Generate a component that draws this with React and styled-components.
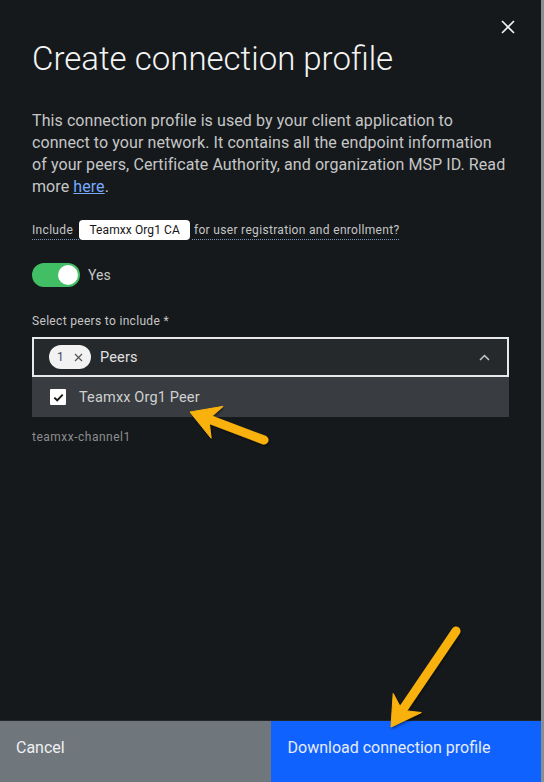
import React from 'react';
import styled, { createGlobalStyle } from 'styled-components';

const Global = createGlobalStyle`
  html, body { margin: 0; padding: 0; background: #15191c; }
  body { font-family: Roboto, "Noto Sans", sans-serif; -webkit-font-smoothing: antialiased; }
  * { box-sizing: border-box; }
`;

const Modal = styled.div`
  position: relative;
  width: 544px;
  height: 782px;
  background: #15191c;
  border-right: 3px solid #8a8e92;
  display: flex;
  flex-direction: column;
  overflow: hidden;
`;

const Header = styled.header`
  padding: 0 26px 0 32px;
`;

const CloseRow = styled.div`
  display: flex;
  justify-content: flex-end;
  padding-top: 20px;
  height: 39px;
`;

const CloseButton = styled.button`
  width: 14px;
  height: 14px;
  padding: 0;
  border: 0;
  background: transparent;
  color: #f4f4f4;
  display: flex;
  cursor: pointer;
  svg { display: block; }
`;

const Title = styled.h2`
  margin: 0;
  font-size: 33px;
  line-height: 40px;
  font-weight: 300;
  color: #f4f4f4;
  letter-spacing: 0;
`;

const Content = styled.div`
  flex: 1;
  padding: 0 32px;
  display: flex;
  flex-direction: column;
`;

const Description = styled.p`
  margin: 31px 0 0;
  font-size: 16px;
  line-height: 22px;
  color: #c6c6c6;
  white-space: nowrap;
  letter-spacing: 0.08px;
`;

const Link = styled.a`
  color: #78a9ff;
  text-decoration: underline;
`;

const IncludeRow = styled.div`
  margin-top: 22px;
  display: flex;
  align-items: center;
  height: 20px;
  font-size: 12px;
  color: #c6c6c6;
  letter-spacing: 0.32px;
`;

const Definition = styled.span`
  line-height: 16px;
  border-bottom: 1px dotted #7d93b8;
  padding-bottom: 1px;
  margin-top: 2px;
  padding-right: ${p => (p.$lead ? '3px' : '0')};
  padding-left: ${p => (p.$lead ? '0' : '2px')};
`;

const InlineTag = styled.span`
  display: inline-flex;
  align-items: center;
  height: 20px;
  padding: 0 10px;
  margin: 0 2px 0 0;
  background: #ffffff;
  color: #161616;
  border-radius: 4px;
  font-size: 12px;
  letter-spacing: 0.1px;
  position: relative;
  z-index: 1;
`;

const ToggleRow = styled.label`
  margin-top: 23px;
  display: flex;
  align-items: center;
  gap: 8px;
  font-size: 14px;
  color: #c6c6c6;
`;

const ToggleTrack = styled.span`
  width: 48px;
  height: 24px;
  border-radius: 12px;
  background: ${p => (p.$on ? '#42be65' : '#6f6f6f')};
  display: flex;
  align-items: center;
  justify-content: ${p => (p.$on ? 'flex-end' : 'flex-start')};
  padding: 0 2px;
`;

const ToggleKnob = styled.span`
  width: 20px;
  height: 20px;
  border-radius: 50%;
  background: #ffffff;
`;

const FieldLabel = styled.div`
  margin-top: 26px;
  font-size: 12px;
  line-height: 16px;
  color: #c6c6c6;
  letter-spacing: 0.32px;
`;

const MultiSelect = styled.div`
  position: relative;
  margin-top: 8px;
`;

const Field = styled.div`
  height: 40px;
  border: 2px solid #e8e8e8;
  background: #25292c;
  display: flex;
  align-items: center;
  padding: 0 17px 0 15px;
  gap: 9px;
`;

const CountTag = styled.span`
  display: inline-flex;
  align-items: center;
  justify-content: space-between;
  width: 42px;
  height: 24px;
  border-radius: 12px;
  background: #f2f2f2;
  padding: 0 8px 0 8px;
  font-size: 12px;
  color: #3a4a66;
  svg { display: block; }
`;

const FieldText = styled.span`
  flex: 1;
  font-size: 14.5px;
  letter-spacing: 0.16px;
  color: #e0e0e0;
`;

const Chevron = styled.span`
  display: flex;
  color: #c6c6c6;
  svg { display: block; }
`;

const Menu = styled.ul`
  position: absolute;
  left: 0;
  right: 0;
  top: 40px;
  margin: 0;
  padding: 0;
  list-style: none;
  background: #393d41;
  z-index: 2;
`;

const MenuItem = styled.li`
  height: 40px;
  display: flex;
  align-items: center;
  padding-left: 18px;
  gap: 13px;
  font-size: 14.5px;
  letter-spacing: 0.16px;
  color: #d0d0d0;
`;

const Checkbox = styled.span`
  width: 16px;
  height: 16px;
  border-radius: 1px;
  background: #ffffff;
  display: flex;
  align-items: center;
  justify-content: center;
  svg { display: block; }
`;

const ChannelText = styled.div`
  margin-top: 52px;
  font-size: 12px;
  line-height: 16px;
  color: #8d8d8d;
  letter-spacing: 0.5px;
`;

const Footer = styled.footer`
  display: grid;
  grid-template-columns: 1fr 1fr;
  height: 62px;
  border-top: 1px solid #23272a;
`;

const FooterButton = styled.button`
  border: 0;
  margin: 0;
  text-align: left;
  display: flex;
  align-items: flex-start;
  padding: 16px 16px 0 ${p => (p.$primary ? '17px' : '16px')};
  font-family: inherit;
  font-size: 16px;
  line-height: 22px;
  color: ${p => (p.$primary ? '#e6ecfa' : '#eef0f2')};
  background: ${p => (p.$primary ? '#0f62fe' : '#6f767c')};
  cursor: pointer;
`;

const Annotations = styled.svg`
  position: absolute;
  left: 0;
  top: 0;
  width: 544px;
  height: 782px;
  pointer-events: none;
  z-index: 5;
  overflow: visible;
`;

function Arrow({ tip, tail }) {
  const dx = tail[0] - tip[0];
  const dy = tail[1] - tip[1];
  const len = Math.hypot(dx, dy);
  const u = [dx / len, dy / len];
  const n = [-u[1], u[0]];
  const pt = (a, b) => [tip[0] + u[0] * a + n[0] * b, tip[1] + u[1] * a + n[1] * b];
  const b1 = pt(29, -17);
  const b2 = pt(29, 17);
  const notch = pt(20, 0);
  const shaftStart = pt(18, 0);
  const head = `M${tip[0]},${tip[1]} L${b1[0]},${b1[1]} L${notch[0]},${notch[1]} L${b2[0]},${b2[1]} Z`;
  return (
    <g filter="url(#arrowShadow)">
      <line
        x1={shaftStart[0]}
        y1={shaftStart[1]}
        x2={tail[0]}
        y2={tail[1]}
        stroke="#f9b10a"
        strokeWidth="9"
        strokeLinecap="round"
      />
      <path d={head} fill="#f9b10a" stroke="#f9b10a" strokeWidth="1" strokeLinejoin="round" />
    </g>
  );
}

export default function App() {
  return (
    <>
      <Global />
      <Modal>
        <Header>
          <CloseRow>
            <CloseButton aria-label="Close">
              <svg width="14" height="14" viewBox="0 0 14 14">
                <path d="M1 1 L13 13 M13 1 L1 13" stroke="currentColor" strokeWidth="1.6" fill="none" />
              </svg>
            </CloseButton>
          </CloseRow>
          <Title>Create connection profile</Title>
        </Header>
        <Content>
          <Description>
            This connection profile is used by your client application to
            <br />
            connect to your network. It contains all the endpoint information
            <br />
            of your peers, Certificate Authority, and organization MSP ID. Read
            <br />
            more <Link href="#">here</Link>.
          </Description>
          <IncludeRow>
            <Definition $lead>Include&nbsp;</Definition>
            <InlineTag>Teamxx Org1 CA</InlineTag>
            <Definition>for user registration and enrollment?</Definition>
          </IncludeRow>
          <ToggleRow>
            <ToggleTrack $on>
              <ToggleKnob />
            </ToggleTrack>
            Yes
          </ToggleRow>
          <FieldLabel>Select peers to include *</FieldLabel>
          <MultiSelect>
            <Field>
              <CountTag>
                1
                <svg width="9" height="9" viewBox="0 0 9 9">
                  <path d="M1 1 L8 8 M8 1 L1 8" stroke="#555" strokeWidth="1.2" fill="none" />
                </svg>
              </CountTag>
              <FieldText>Peers</FieldText>
              <Chevron>
                <svg width="11" height="7" viewBox="0 0 11 7">
                  <path d="M1 6 L5.5 1.5 L10 6" stroke="currentColor" strokeWidth="1.5" fill="none" />
                </svg>
              </Chevron>
            </Field>
            <Menu>
              <MenuItem>
                <Checkbox>
                  <svg width="11" height="9" viewBox="0 0 11 9">
                    <path d="M1.3 4.6 L4.2 7.3 L9.7 1.6" stroke="#161616" strokeWidth="1.9" fill="none" />
                  </svg>
                </Checkbox>
                Teamxx Org1 Peer
              </MenuItem>
            </Menu>
          </MultiSelect>
          <ChannelText>teamxx-channel1</ChannelText>
        </Content>
        <Footer>
          <FooterButton>Cancel</FooterButton>
          <FooterButton $primary>Download connection profile</FooterButton>
        </Footer>
        <Annotations viewBox="0 0 544 782">
          <defs>
            <filter id="arrowShadow" x="-20%" y="-20%" width="140%" height="140%">
              <feDropShadow dx="1" dy="1.5" stdDeviation="1.2" floodColor="#000" floodOpacity="0.45" />
            </filter>
          </defs>
          <Arrow tip={[190, 412]} tail={[264, 440]} />
          <Arrow tip={[391, 727]} tail={[456, 631]} />
        </Annotations>
      </Modal>
    </>
  );
}
